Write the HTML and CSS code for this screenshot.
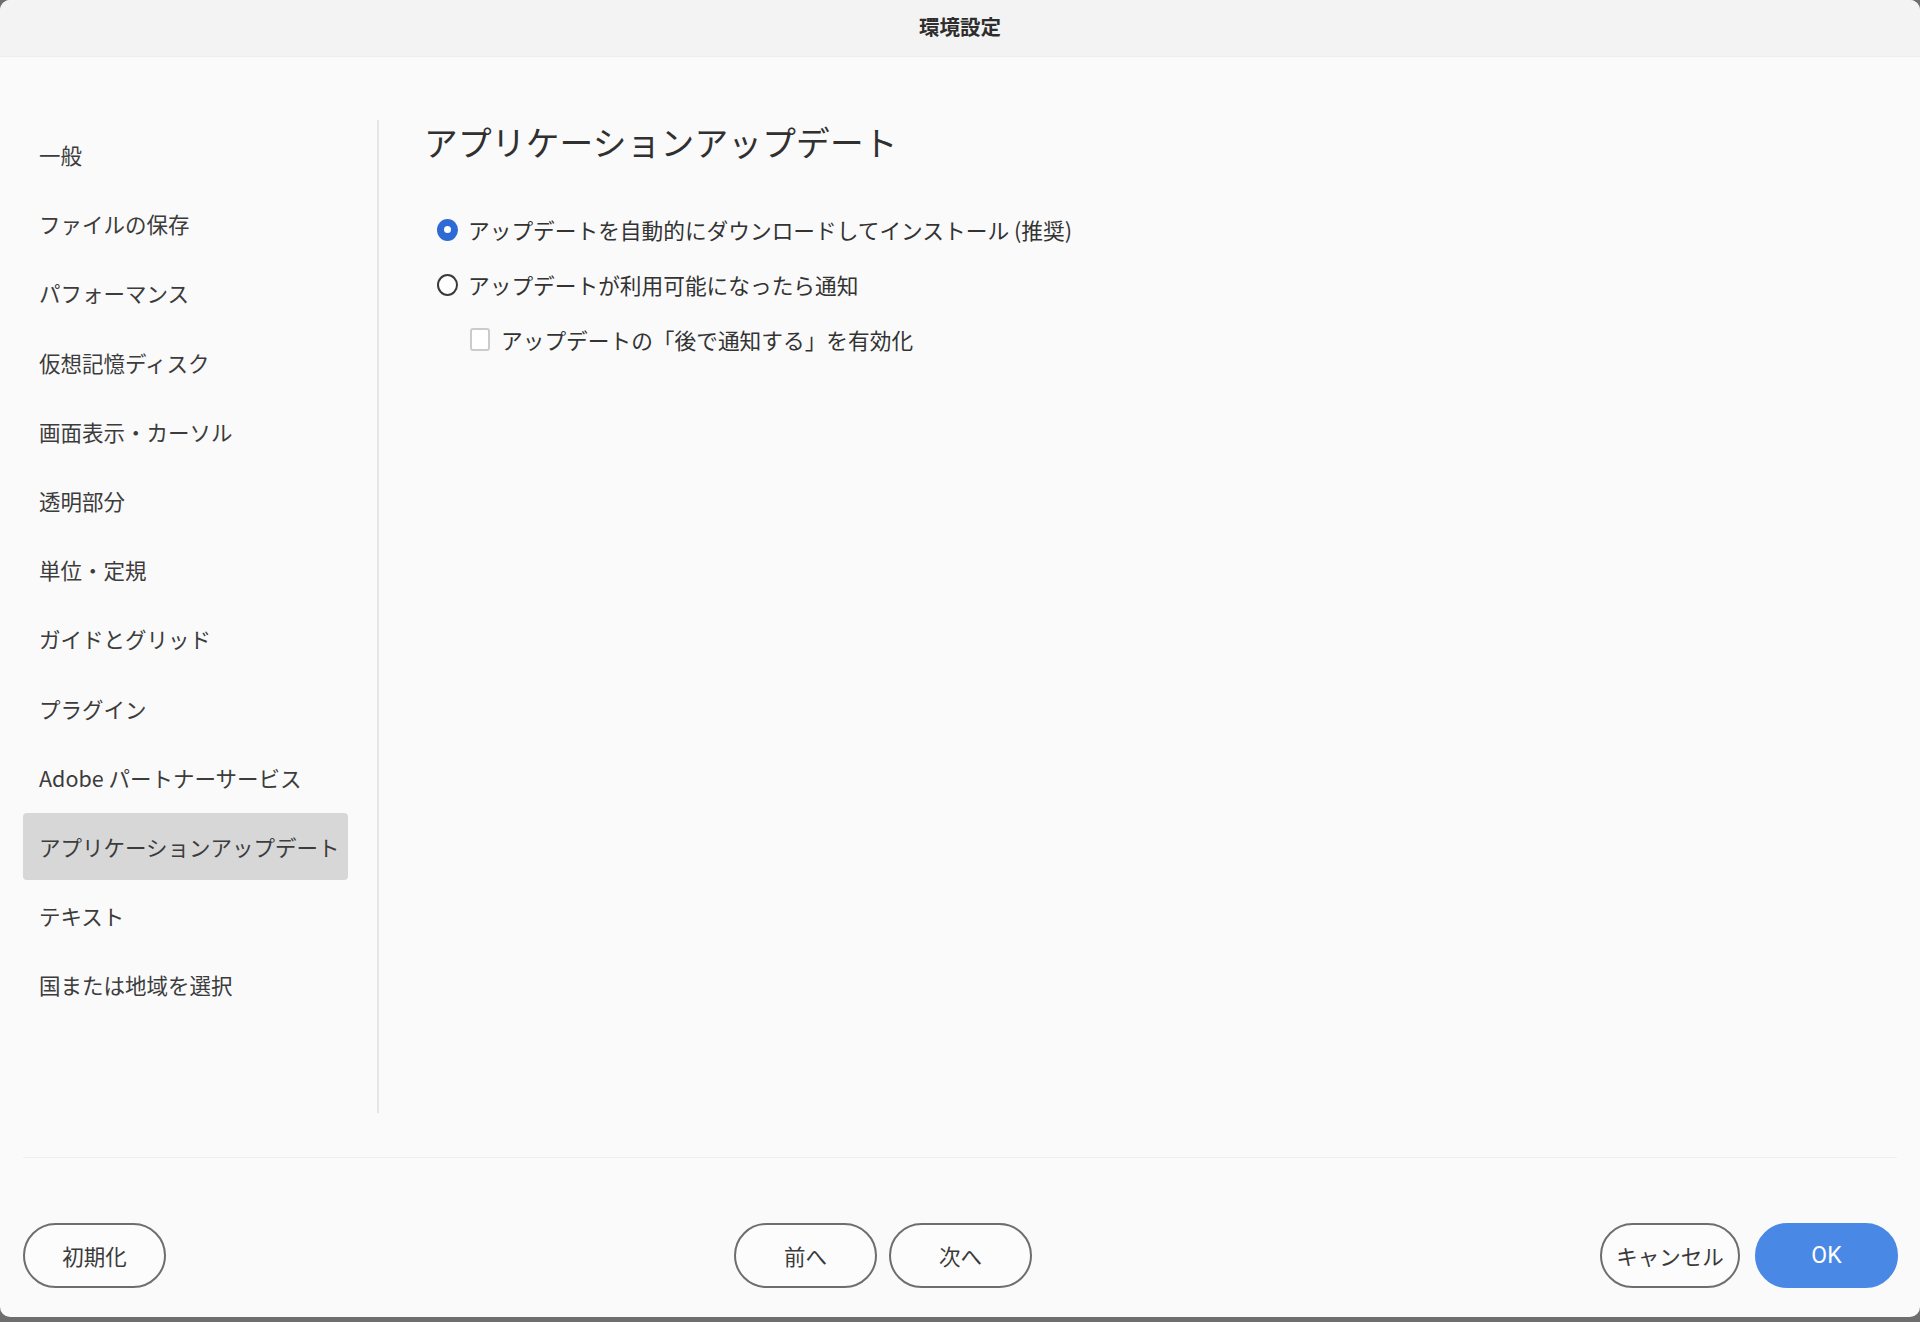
FILE: index.html
```html
<!DOCTYPE html>
<html lang="ja">
<head>
<meta charset="utf-8">
<title>環境設定</title>
<link rel="stylesheet" href="styles.css">
</head>
<body>
<div class="window">
  <header class="titlebar">環境設定</header>
  <div class="main">
    <nav class="sidebar">
      <div class="nav-item">一般</div>
      <div class="nav-item">ファイルの保存</div>
      <div class="nav-item">パフォーマンス</div>
      <div class="nav-item">仮想記憶ディスク</div>
      <div class="nav-item">画面表示・カーソル</div>
      <div class="nav-item">透明部分</div>
      <div class="nav-item">単位・定規</div>
      <div class="nav-item">ガイドとグリッド</div>
      <div class="nav-item">プラグイン</div>
      <div class="nav-item">Adobe パートナーサービス</div>
      <div class="nav-item active">アプリケーションアップデート</div>
      <div class="nav-item">テキスト</div>
      <div class="nav-item">国または地域を選択</div>
    </nav>
    <section class="content">
      <h1 class="page-title">アプリケーションアップデート</h1>
      <div class="options">
        <div class="option">
          <span class="radio checked"></span>
          <span class="label">アップデートを自動的にダウンロードしてインストール (推奨)</span>
        </div>
        <div class="option">
          <span class="radio"></span>
          <span class="label">アップデートが利用可能になったら通知</span>
        </div>
        <div class="option sub">
          <span class="checkbox"></span>
          <span class="label">アップデートの「後で通知する」を有効化</span>
        </div>
      </div>
    </section>
  </div>
  <div class="separator"></div>
  <footer class="footer">
    <div class="group">
      <button class="btn">初期化</button>
    </div>
    <div class="group">
      <button class="btn">前へ</button>
      <button class="btn">次へ</button>
    </div>
    <div class="group right">
      <button class="btn cancel">キャンセル</button>
      <button class="btn primary">OK</button>
    </div>
  </footer>
</div>
</body>
</html>
```

FILE: styles.css
```css
* { box-sizing: border-box; }

html, body {
  margin: 0;
  padding: 0;
}

body {
  width: 1920px;
  height: 1322px;
  background: #6e6e6e;
  font-family: "Noto Sans CJK JP", "Noto Sans", sans-serif;
  color: #3a3a3a;
  overflow: hidden;
}

.window {
  width: 1920px;
  height: 1317px;
  background: #fafafa;
  border-radius: 10px;
  overflow: hidden;
  display: flex;
  flex-direction: column;
}

.titlebar {
  height: 57px;
  flex: none;
  background: #f3f3f3;
  border-bottom: 1px solid #ededed;
  display: flex;
  align-items: center;
  justify-content: center;
  font-size: 20.5px;
  font-weight: 700;
  color: #2e2e2e;
  padding-bottom: 4px;
}

.main {
  flex: 1;
  display: flex;
  padding: 63px 0 44px 0;
  min-height: 0;
}

.sidebar {
  width: 379px;
  flex: none;
  border-right: 2px solid #e6e6e6;
  padding: 1px 0 0 23px;
  display: flex;
  flex-direction: column;
  gap: 2.2px;
}

.nav-item {
  width: 325px;
  height: 67px;
  flex: none;
  display: flex;
  align-items: center;
  padding-left: 16px;
  font-size: 21.5px;
  color: #3c3c3c;
  white-space: nowrap;
  border-radius: 4px;
}

.nav-item.active {
  background: #d7d7d7;
}

.content {
  flex: 1;
  padding: 2px 0 0 45px;
}

.page-title {
  margin: 0;
  font-size: 33.7px;
  font-weight: 400;
  line-height: 40px;
  color: #303030;
  letter-spacing: 0.2px;
}

.options {
  margin-top: 40px;
  display: flex;
  flex-direction: column;
}

.option {
  height: 55px;
  display: flex;
  align-items: center;
  padding-left: 13px;
  gap: 10px;
}

.option.sub {
  padding-left: 46px;
  gap: 11px;
}

.label {
  font-size: 21.7px;
  color: #333;
  white-space: nowrap;
}

.radio {
  width: 21px;
  height: 22px;
  border-radius: 50%;
  border: 2.5px solid #3a3a3a;
  background: #fff;
  flex: none;
  display: flex;
  align-items: center;
  justify-content: center;
}

.radio.checked {
  border: none;
  background: #2d6ad4;
}

.radio.checked::after {
  content: "";
  width: 7px;
  height: 7px;
  border-radius: 50%;
  background: #fff;
}

.checkbox {
  width: 20px;
  height: 23px;
  border: 2px solid #cbcbcb;
  border-radius: 3px;
  background: #fff;
  flex: none;
}

.separator {
  height: 1px;
  flex: none;
  margin: 0 23px;
  background: #efefef;
}

.footer {
  flex: none;
  display: flex;
  justify-content: space-between;
  padding: 65px 22px 29px 23px;
}

.group {
  display: flex;
  gap: 12px;
}

.group.right {
  gap: 15px;
}

.btn {
  width: 143px;
  height: 65px;
  border: 2px solid #6e6e6e;
  border-radius: 33px;
  background: #fcfcfc;
  font-family: "Noto Sans CJK JP", "Noto Sans", sans-serif;
  font-size: 21.5px;
  color: #3a3a3a;
  padding: 0;
  display: flex;
  align-items: center;
  justify-content: center;
}

.btn.cancel {
  width: 140px;
}

.btn.primary {
  background: #4a88e6;
  border-color: #4a88e6;
  color: #fff;
  font-family: "Roboto", "Liberation Sans", sans-serif;
  font-size: 23px;
}
```
